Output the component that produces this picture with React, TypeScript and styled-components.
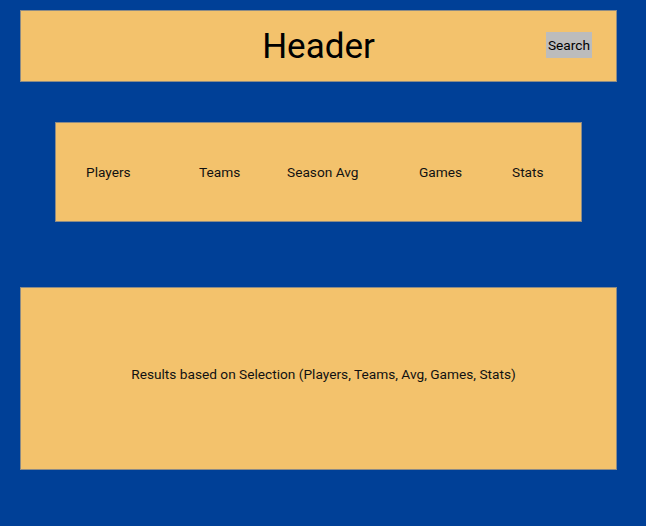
import React from "react";
import styled, { createGlobalStyle } from "styled-components";

const GlobalStyle = createGlobalStyle`
  html, body {
    margin: 0;
    padding: 0;
    background: #004097;
    font-family: Roboto, "Liberation Sans", sans-serif;
  }
`;

const Page = styled.div`
  display: flex;
  flex-direction: column;
  padding: 10px 29px 0 20px;
  min-height: 526px;
  box-sizing: border-box;
`;

const Panel = styled.div`
  background: #f3c26c;
  border: 1px solid #8c8b86;
  box-sizing: border-box;
`;

const HeaderBar = styled(Panel)`
  position: relative;
  height: 72px;
  display: flex;
  align-items: center;
  justify-content: center;
`;

const Title = styled.h1`
  margin: 0;
  font-size: 35px;
  font-weight: 400;
  color: #000;
`;

const SearchButton = styled.button`
  position: absolute;
  right: 24px;
  top: 21px;
  height: 26px;
  padding: 0 2px;
  border: none;
  background: #bcbcbc;
  font-family: Roboto, "Liberation Sans", sans-serif;
  font-size: 13.7px;
  color: #000;
`;

const NavBar = styled(Panel)`
  margin: 40px 35px 0 35px;
  height: 100px;
  display: grid;
  grid-template-columns: 113px 88px 132px 93px auto;
  align-items: center;
  padding-left: 30px;
`;

const NavItem = styled.span`
  font-size: 13.7px;
  color: #111;
`;

const Results = styled(Panel)`
  margin-top: 65px;
  height: 183px;
  display: flex;
  align-items: center;
  justify-content: center;
  padding: 0 0 10px 10px;
  font-size: 13.7px;
  color: #111;
`;

const navItems = ["Players", "Teams", "Season Avg", "Games", "Stats"];

export default function App() {
  return (
    <>
      <GlobalStyle />
      <Page>
        <HeaderBar>
          <Title>Header</Title>
          <SearchButton>Search</SearchButton>
        </HeaderBar>
        <NavBar>
          {navItems.map((item) => (
            <NavItem key={item}>{item}</NavItem>
          ))}
        </NavBar>
        <Results>Results based on Selection (Players, Teams, Avg, Games, Stats)</Results>
      </Page>
    </>
  );
}
